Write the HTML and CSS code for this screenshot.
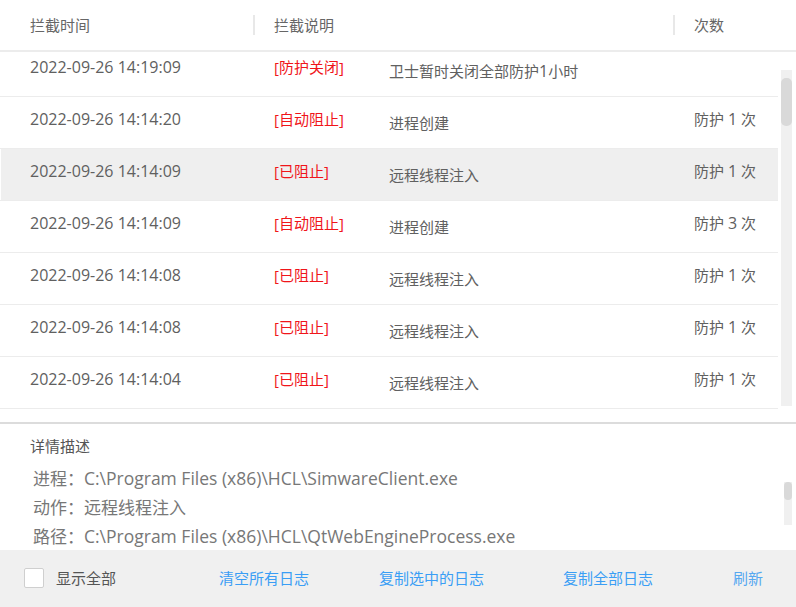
FILE: index.html
```html
<!DOCTYPE html>
<html lang="zh-CN">
<head>
<meta charset="utf-8">
<title>拦截日志</title>
<link rel="stylesheet" href="styles.css">
</head>
<body>
<div class="app">
  <div class="thead">
    <div class="th th-time">拦截时间</div>
    <div class="th th-desc">拦截说明</div>
    <div class="th th-count">次数</div>
  </div>
  <div class="tbody">
    <div class="rows">
      <div class="row">
        <div class="c-time">2022-09-26 14:19:09</div>
        <div class="c-tag">[防护关闭]</div>
        <div class="c-desc">卫士暂时关闭全部防护<span class="lat">1</span>小时</div>
        <div class="c-count"></div>
      </div>
      <div class="row">
        <div class="c-time">2022-09-26 14:14:20</div>
        <div class="c-tag">[自动阻止]</div>
        <div class="c-desc">进程创建</div>
        <div class="c-count">防护 <span class="lat">1</span> 次</div>
      </div>
      <div class="row selected">
        <div class="c-time">2022-09-26 14:14:09</div>
        <div class="c-tag">[已阻止]</div>
        <div class="c-desc">远程线程注入</div>
        <div class="c-count">防护 <span class="lat">1</span> 次</div>
      </div>
      <div class="row">
        <div class="c-time">2022-09-26 14:14:09</div>
        <div class="c-tag">[自动阻止]</div>
        <div class="c-desc">进程创建</div>
        <div class="c-count">防护 <span class="lat">3</span> 次</div>
      </div>
      <div class="row">
        <div class="c-time">2022-09-26 14:14:08</div>
        <div class="c-tag">[已阻止]</div>
        <div class="c-desc">远程线程注入</div>
        <div class="c-count">防护 <span class="lat">1</span> 次</div>
      </div>
      <div class="row">
        <div class="c-time">2022-09-26 14:14:08</div>
        <div class="c-tag">[已阻止]</div>
        <div class="c-desc">远程线程注入</div>
        <div class="c-count">防护 <span class="lat">1</span> 次</div>
      </div>
      <div class="row">
        <div class="c-time">2022-09-26 14:14:04</div>
        <div class="c-tag">[已阻止]</div>
        <div class="c-desc">远程线程注入</div>
        <div class="c-count">防护 <span class="lat">1</span> 次</div>
      </div>
    </div>
    <div class="vscroll list-scroll"><div class="thumb list-thumb"></div></div>
  </div>
  <div class="details">
    <div class="details-title">详情描述</div>
    <div class="details-body">
      <div class="dline">进程：<span class="path">C:\Program Files (x86)\HCL\SimwareClient.exe</span></div>
      <div class="dline">动作：远程线程注入</div>
      <div class="dline">路径：<span class="path">C:\Program Files (x86)\HCL\QtWebEngineProcess.exe</span></div>
    </div>
    <div class="vscroll detail-scroll"><div class="thumb detail-thumb"></div></div>
  </div>
  <div class="footer">
    <label class="showall"><span class="checkbox"></span><span>显示全部</span></label>
    <a class="link l1">清空所有日志</a>
    <a class="link l2">复制选中的日志</a>
    <a class="link l3">复制全部日志</a>
    <a class="link l4">刷新</a>
  </div>
</div>
</body>
</html>
```
FILE: styles.css
```css
* { box-sizing: border-box; }
html, body { margin: 0; padding: 0; background: #fff; }
body {
  font-family: "Segoe UI", "Open Sans", "Noto Sans CJK SC", sans-serif;
  font-size: 15px;
  color: #606060;
}
.app {
  width: 796px;
  height: 607px;
  display: flex;
  flex-direction: column;
  overflow: hidden;
}
.thead {
  height: 52px;
  flex: none;
  display: flex;
  align-items: center;
  border-bottom: 2px solid #ececec;
  color: #666;
}
.th { line-height: 20px; }
.th-time { width: 253px; padding-left: 30px; }
.th-desc { width: 420px; padding-left: 19px; border-left: 2px solid #e8e8e8; height: 20px; }
.th-count { flex: 1; padding-left: 19px; border-left: 2px solid #e8e8e8; height: 20px; }

.tbody {
  height: 372px;
  flex: none;
  position: relative;
  overflow: hidden;
  border-bottom: 2px solid #dcdcdc;
}
.rows {
  width: 778px;
  margin-top: -7px;
}
.row {
  height: 52px;
  display: flex;
  border-bottom: 1px solid #ececec;
  line-height: 20px;
}
.row.selected {
  background: linear-gradient(to right, #fff 1px, #efefef 1px);
}
.c-time { width: 274px; padding-left: 30px; padding-top: 12px; font-size: 16px; }
.c-tag { width: 115px; padding-top: 12px; color: #f0151a; }
.c-desc { width: 305px; padding-top: 16px; }
.c-count { flex: 1; padding-top: 12px; }
.lat { font-size: 16px; }

.vscroll {
  position: absolute;
  background: #f0f0f0;
}
.thumb {
  position: absolute;
  left: 0;
  right: 0;
  background: #d9d9d9;
  border-radius: 5px;
}
.list-scroll { left: 781px; width: 11px; top: 18px; height: 336px; }
.list-thumb { top: 8px; height: 48px; }

.details {
  height: 126px;
  flex: none;
  position: relative;
  overflow: hidden;
  padding: 12px 0 0 30px;
}
.details-title { line-height: 20px; color: #555; }
.details-body {
  padding-left: 3px;
  padding-top: 8px;
  font-size: 17px;
  line-height: 29px;
  color: #777;
  white-space: nowrap;
}
.path { font-size: 17.5px; }
.detail-scroll { left: 784px; width: 8px; top: 58px; height: 43px; }
.detail-thumb { top: 0; height: 18px; border-radius: 4px; }

.footer {
  flex: 1;
  background: #f0f0f0;
  display: flex;
  align-items: center;
  padding-left: 24px;
  line-height: 20px;
  padding-bottom: 1px;
}
.showall { display: flex; align-items: center; color: #555; width: 195px; }
.checkbox {
  width: 20px; height: 20px;
  background: #fff;
  border: 1px solid #cfcfcf;
  border-radius: 2px;
  margin-right: 12px;
}
.link { color: #3a9ef5; cursor: pointer; }
.l1 { width: 160px; }
.l2 { width: 184px; }
.l3 { width: 170px; }
.l4 { color: #56a8f0; }
```
